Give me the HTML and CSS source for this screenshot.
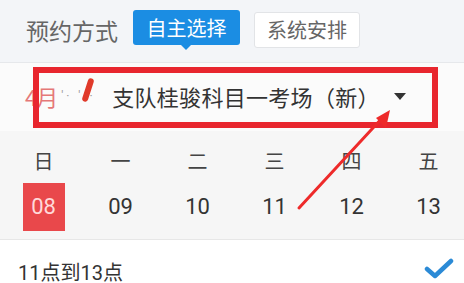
FILE: index.html
```html
<!DOCTYPE html>
<html lang="zh">
<head>
<meta charset="utf-8">
<link rel="stylesheet" href="styles.css">
</head>
<body>
<div class="page">
  <div class="mode-bar">
    <span class="mode-label">预约方式</span>
    <button class="mode-btn active">自主选择</button>
    <button class="mode-btn">系统安排</button>
  </div>
  <div class="site-row">
    <span class="month">4月</span>
    <span class="blur">' ·&nbsp;&nbsp;&nbsp;' · ·</span>
    <span class="site-name">支队桂骏科目一考场（新）</span>
    <span class="caret"></span>
  </div>
  <div class="calendar">
    <div class="cal-row weekdays">
      <span>日</span><span>一</span><span>二</span><span>三</span><span>四</span><span>五</span>
    </div>
    <div class="cal-row dates">
      <span class="day selected">08</span><span class="day">09</span><span class="day">10</span><span class="day">11</span><span class="day">12</span><span class="day">13</span>
    </div>
  </div>
  <div class="time-row">
    <span class="time-text">11点到13点</span>
    <svg class="check" width="30" height="24" viewBox="0 0 30 24"><path d="M3 12 L11 19 L27 4" fill="none" stroke="#2b8ad6" stroke-width="4.5" stroke-linecap="round" stroke-linejoin="round"/></svg>
  </div>

  <div class="mark-box"></div>
  <div class="scribble"></div>
  <svg class="arrow" width="464" height="283" viewBox="0 0 464 283">
    <line x1="299" y1="208" x2="384" y2="116" stroke="#ee2a2a" stroke-width="3" stroke-linecap="round"/>
    <polygon points="390,110 376,118 386,128" fill="#ee2a2a"/>
  </svg>
</div>
</body>
</html>
```
FILE: styles.css
```css
html, body {
  margin: 0;
  padding: 0;
  background: #ffffff;
}
.page {
  position: relative;
  width: 464px;
  height: 283px;
  overflow: hidden;
  font-family: Roboto, "Noto Sans CJK SC", sans-serif;
}
.mode-bar {
  height: 63px;
  box-sizing: border-box;
  background: #f3f5f8;
  border-bottom: 1px solid #e6e8eb;
  display: flex;
  align-items: flex-start;
  padding: 10px 0 0 26px;
}
.mode-label {
  font-size: 23px;
  line-height: 34px;
  color: #666;
  margin-top: 3px;
  font-family: "Noto Sans CJK SC", sans-serif;
}
.mode-btn {
  font-family: "Noto Sans CJK SC", sans-serif;
  font-size: 20px;
  line-height: 1;
  border-radius: 3px;
  padding: 0;
  margin: 0;
}
.mode-btn.active {
  position: relative;
  margin-left: 15px;
  width: 107px;
  height: 35px;
  background: #1b8de3;
  color: #fff;
  border: none;
}
.mode-btn.active::after {
  content: "";
  position: absolute;
  left: 48px;
  bottom: -5px;
  border-left: 5px solid transparent;
  border-right: 5px solid transparent;
  border-top: 5px solid #1b8de3;
}
.mode-btn:not(.active) {
  margin-left: 14px;
  margin-top: 2px;
  width: 106px;
  height: 36px;
  background: #fff;
  color: #666;
  border: 1px solid #e2e4e7;
}
.site-row {
  height: 68px;
  box-sizing: border-box;
  background: #fbfbfb;
  display: flex;
  align-items: center;
  padding-left: 25px;
  padding-bottom: 2px;
}
.month {
  font-size: 22px;
  color: #e57878;
  font-family: "Noto Sans CJK SC", sans-serif;
  letter-spacing: -1px;
}
.blur {
  width: 51px;
  font-size: 12px;
  color: #9a9a9a;
  margin-left: 4px;
  white-space: pre;
  overflow: hidden;
}
.site-name {
  font-family: "Noto Sans CJK SC", sans-serif;
  font-size: 22px;
  color: #333;
  letter-spacing: 0.3px;
}
.caret {
  margin-left: 14px;
  width: 0;
  height: 0;
  border-left: 6px solid transparent;
  border-right: 6px solid transparent;
  border-top: 7px solid #333;
}
.calendar {
  background: #f6f6f6;
  border-bottom: 1px solid #e7e7e7;
  height: 109px;
  box-sizing: border-box;
  padding-top: 16px;
}
.cal-row {
  display: grid;
  grid-template-columns: repeat(6, 77px);
  padding-left: 5px;
}
.weekdays span {
  text-align: center;
  font-family: "Noto Sans CJK SC", sans-serif;
  font-size: 20px;
  line-height: 28px;
  color: #444;
}
.dates {
  margin-top: 8px;
}
.day {
  justify-self: center;
  width: 42px;
  height: 48px;
  line-height: 48px;
  text-align: center;
  font-size: 22px;
  color: #333;
}
.day.selected {
  background: #e9484b;
  color: #ffd9d9;
}
.time-row {
  height: 42px;
  display: flex;
  align-items: center;
  justify-content: space-between;
  padding: 10px 10px 0 18px;
}
.time-text {
  font-size: 20px;
  color: #333;
  font-family: Roboto, "Noto Sans CJK SC", sans-serif;
}
.check {
  display: block;
  margin-top: -4px;
}
.mark-box {
  position: absolute;
  left: 33px;
  top: 67px;
  width: 405px;
  height: 61px;
  box-sizing: border-box;
  border: 6px solid #e8262e;
}
.scribble {
  position: absolute;
  left: 85px;
  top: 78px;
  width: 6px;
  height: 24px;
  background: #e03a2a;
  border-radius: 3px;
  transform: rotate(18deg);
}
.arrow {
  position: absolute;
  left: 0;
  top: 0;
  pointer-events: none;
}
```
